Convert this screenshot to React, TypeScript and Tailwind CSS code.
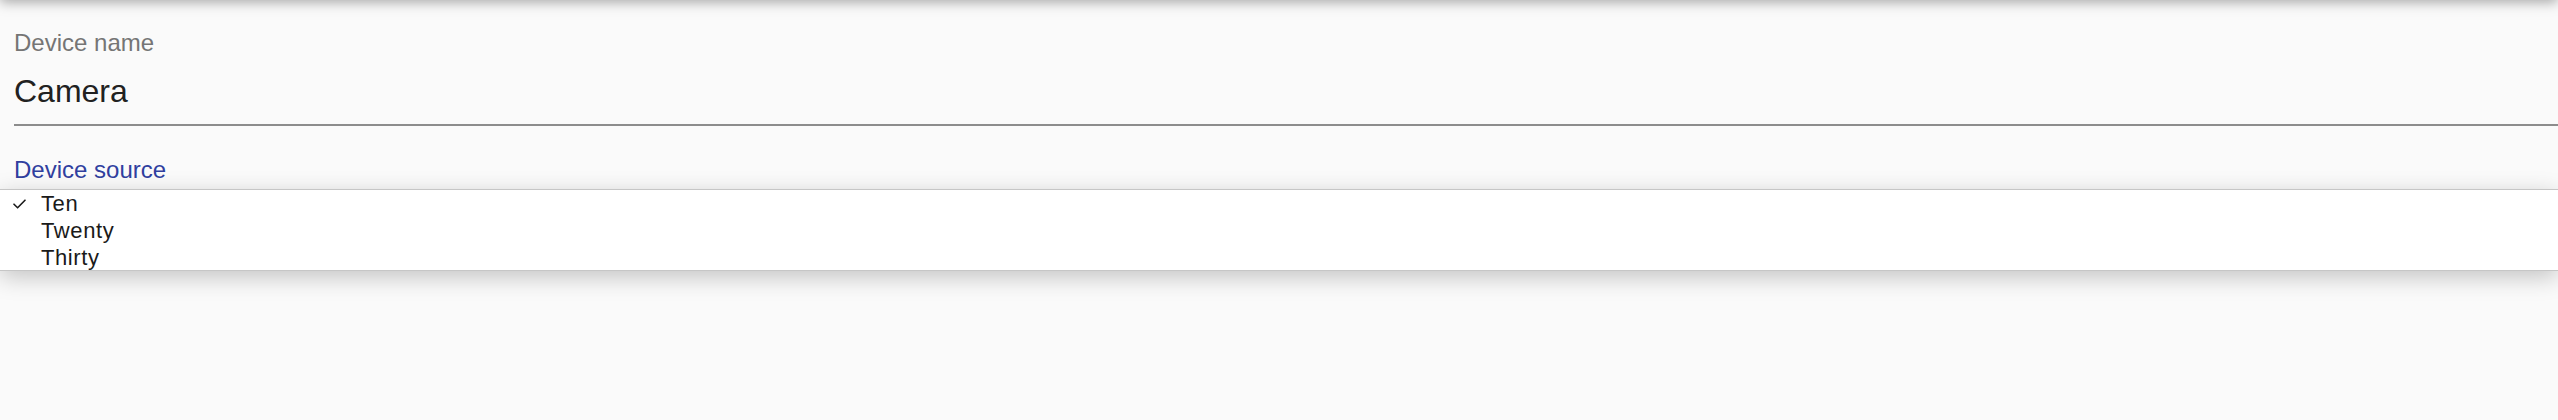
const options = ['Ten', 'Twenty', 'Thirty'];

const CheckIcon = () => (
  <svg width="13" height="10" viewBox="0 0 13 10" fill="none" className="block">
    <path d="M1 5.2 L4.6 8.8 L12 1.2" stroke="#1a1a1a" strokeWidth="1.6" strokeLinecap="round" strokeLinejoin="round" />
  </svg>
);

const App = () => {
  return (
    <div className="relative h-[420px] w-full overflow-hidden bg-[#fafafa] font-['Liberation_Sans',Arial,sans-serif]">
      {/* app bar sitting just above the visible area */}
      <div className="-mt-[40px] h-[40px] w-full bg-[#fafafa] shadow-[0_2px_12px_rgba(0,0,0,0.35)]" />

      <div className="flex flex-col pl-[14px] pt-[31px]">
        <label className="text-[24px] leading-none text-[#757575]">Device name</label>
        <div className="mt-[20px] border-b-2 border-[#8c8c8c] pb-[17px]">
          <span className="block text-[32px] leading-none text-[#212121]">Camera</span>
        </div>
        <label className="mt-[32px] text-[24px] leading-none text-[#303f9f]">Device source</label>
      </div>

      {/* open select menu */}
      <div className="absolute left-0 right-0 top-[189px] h-[82px] overflow-hidden border-y border-[#c6c6c6] bg-white shadow-[0_6px_22px_rgba(0,0,0,0.22)]">
        {options.map((opt, i) => (
          <div key={opt} className="flex h-[27px] items-center">
            <div className="flex w-[41px] justify-end pr-[15px]">{i === 0 && <CheckIcon />}</div>
            <span className="text-[22px] leading-[27px] tracking-[0.6px] text-[#1a1a1a]">{opt}</span>
          </div>
        ))}
      </div>
    </div>
  );
};

export default App;
